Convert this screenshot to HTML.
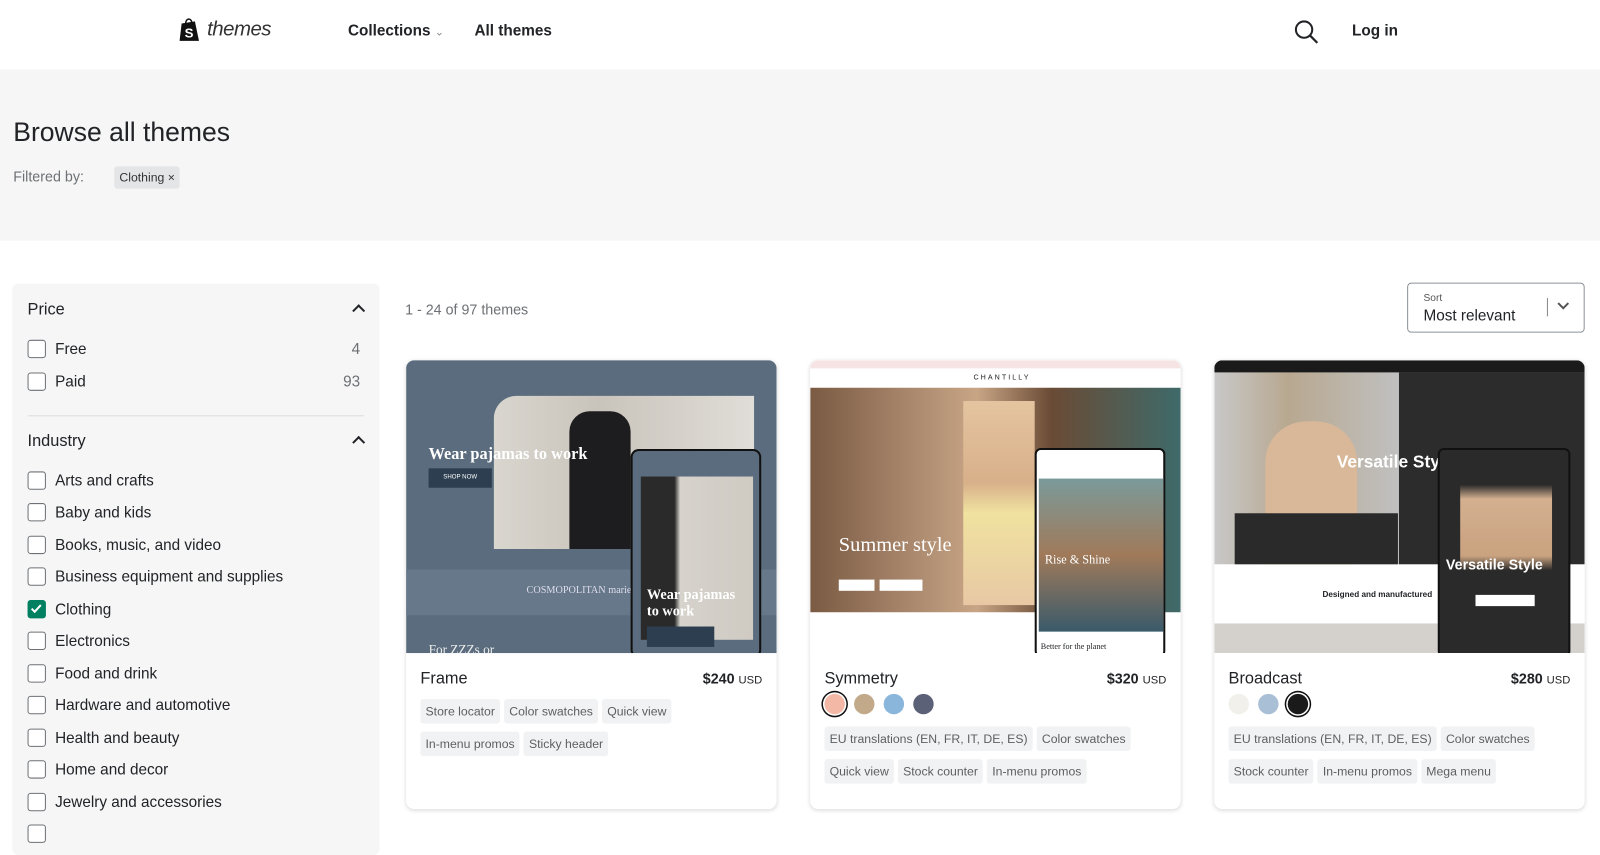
<!DOCTYPE html>
<html><head><style>
*{box-sizing:border-box;margin:0;padding:0}
body{width:1600px;height:826px;overflow:hidden;background:#fff;font-family:"Liberation Sans",sans-serif;color:#212326;position:relative}
#w{position:absolute;left:0;top:0;width:1568px;height:810px;transform:scale(1.0204);transform-origin:0 0}
.abs{position:absolute}
.nav{font-weight:bold;font-size:15px;top:22px;color:#212326}
.hero{top:68px;left:0;width:1568px;height:168px;background:#f6f6f7}
.side{left:12px;top:278px;width:360px;height:560px;background:#f6f6f7;border-radius:6px}
.cb{position:absolute;left:15px;width:18px;height:18px;border:1.5px solid #6d7175;border-radius:3px;background:#fff}
.lbl{position:absolute;left:42px;font-size:15px;color:#212326}
.card{position:absolute;top:353px;width:363px;height:440px;background:#fff;border-radius:8px;box-shadow:0 1px 4px rgba(0,0,0,.15);overflow:hidden}
.img{position:absolute;left:0;top:0;width:363px;height:287px;overflow:hidden}
.name{position:absolute;left:14px;top:304px;font-size:16px}
.price{position:absolute;right:14px;top:304px;font-size:14px;font-weight:bold}
.price small{font-size:11px;font-weight:normal}
.tags{position:absolute;left:14px;width:340px}
.tag{display:inline-block;background:#f1f2f3;color:#5c5f62;font-size:12px;padding:5px 5px;margin:0 4px 8px 0;border-radius:3px}
.sw{display:inline-block;width:20px;height:20px;border-radius:50%;margin-right:9px}
.chev{position:absolute;right:16px;width:9px;height:9px;border-left:2px solid #212326;border-top:2px solid #212326;transform:rotate(45deg)}
</style></head><body><div id="w">
<svg class="abs" style="left:175px;top:16px" width="22" height="26" viewBox="0 0 22 26"><path d="M3 7 L16 5 L20 24 L1 24 Z" fill="#111"/><path d="M7 7 C7 2 12 1 13 6" stroke="#111" stroke-width="1.5" fill="none"/><text x="6" y="21" font-size="13" font-weight="bold" fill="#fff" font-family="Liberation Sans">S</text></svg>
<div class="abs" style="left:203px;top:18px;font-size:20px;font-style:italic;color:#333;letter-spacing:-0.5px">themes</div>
<div class="abs nav" style="left:341px">Collections <span style="font-weight:normal;color:#888;font-size:11px">&#8964;</span></div>
<div class="abs nav" style="left:465px">All themes</div>
<svg class="abs" style="left:1268px;top:19px" width="25" height="25" viewBox="0 0 25 25"><circle cx="10" cy="10" r="8" stroke="#212326" stroke-width="2" fill="none"/><line x1="16" y1="16" x2="23" y2="23" stroke="#212326" stroke-width="2.2"/></svg>
<div class="abs nav" style="left:1325px">Log in</div>
<div class="abs hero"></div>
<div class="abs" style="left:13px;top:114px;font-size:26px;color:#212326">Browse all themes</div>
<div class="abs" style="left:13px;top:165px;font-size:14px;color:#6d7175">Filtered by:</div>
<div class="abs" style="left:112px;top:163px;background:#e4e5e7;padding:4px 5px;font-size:12px;color:#333;border-radius:3px">Clothing ×</div>
<div class="abs side">
<div class="lbl" style="left:15px;top:17px;font-size:16px">Price</div><div class="chev" style="top:22px"></div>
<div class="cb" style="top:55px"></div><div class="lbl" style="top:56px">Free</div><div class="lbl" style="left:auto;right:19px;top:56px;color:#6d7175">4</div>
<div class="cb" style="top:87px"></div><div class="lbl" style="top:88px">Paid</div><div class="lbl" style="left:auto;right:19px;top:88px;color:#6d7175">93</div>
<div style="position:absolute;left:15px;top:129px;width:330px;height:1px;background:#dcdcdc"></div>
<div class="lbl" style="left:15px;top:146px;font-size:16px">Industry</div><div class="chev" style="top:151px"></div>
<div class="cb" style="top:184px"></div><div class="lbl" style="top:185px">Arts and crafts</div>
<div class="cb" style="top:215px"></div><div class="lbl" style="top:216px">Baby and kids</div>
<div class="cb" style="top:247px"></div><div class="lbl" style="top:248px">Books, music, and video</div>
<div class="cb" style="top:278px"></div><div class="lbl" style="top:279px">Business equipment and supplies</div>
<div class="cb" style="top:310px;background:#008060;border-color:#008060"><svg width="15" height="15" viewBox="0 0 15 15" style="position:absolute;left:0;top:0"><path d="M3 7.5 L6 10.5 L12 4" stroke="#fff" stroke-width="2" fill="none"/></svg></div><div class="lbl" style="top:311px">Clothing</div>
<div class="cb" style="top:341px"></div><div class="lbl" style="top:342px">Electronics</div>
<div class="cb" style="top:373px"></div><div class="lbl" style="top:374px">Food and drink</div>
<div class="cb" style="top:404px"></div><div class="lbl" style="top:405px">Hardware and automotive</div>
<div class="cb" style="top:436px"></div><div class="lbl" style="top:437px">Health and beauty</div>
<div class="cb" style="top:467px"></div><div class="lbl" style="top:468px">Home and decor</div>
<div class="cb" style="top:499px"></div><div class="lbl" style="top:500px">Jewelry and accessories</div>
<div class="cb" style="top:530px"></div>
</div>
<div class="abs" style="left:397px;top:295px;font-size:14px;color:#6d7175">1 - 24 of 97 themes</div>
<div class="abs" style="left:1379px;top:277px;width:174px;height:49px;border:1px solid #8c9196;border-radius:4px">
<div class="abs" style="left:15px;top:9px;font-size:10px;color:#555">Sort</div>
<div class="abs" style="left:15px;top:23px;font-size:15px">Most relevant</div>
<div class="abs" style="left:136px;top:14px;width:1px;height:18px;background:#888"></div>
<svg class="abs" style="left:146px;top:18px" width="12" height="8"><path d="M1 1 L6 6 L11 1" stroke="#555" stroke-width="2" fill="none"/></svg>
</div>

<div class="card" style="left:398px">
<div class="img" style="background:#5a6c7d">
<div class="abs" style="left:86px;top:35px;width:255px;height:150px;background:linear-gradient(90deg,#d9d6cf,#c9c4bb 40%,#e0ddd8);border-radius:22px 0 0 0"></div>
<div class="abs" style="left:160px;top:50px;width:60px;height:135px;background:#1d1d1f;border-radius:20px 20px 0 0"></div>
<div class="abs" style="left:0;top:205px;width:363px;height:45px;background:#667889"></div>
<div class="abs" style="left:22px;top:84px;font-family:'Liberation Serif',serif;font-weight:bold;font-size:16px;color:#fff">Wear pajamas to work</div>
<div class="abs" style="left:22px;top:106px;width:62px;height:19px;background:#2c3e50;color:#fff;font-size:6px;text-align:center;line-height:19px">SHOP NOW</div>
<div class="abs" style="left:118px;top:220px;color:#dde;font-size:10px;font-family:'Liberation Serif',serif">COSMOPOLITAN marie claire</div>
<div class="abs" style="left:22px;top:276px;color:#eee;font-size:13px;font-family:'Liberation Serif',serif">For ZZZs or</div>
<div class="abs" style="left:220px;top:87px;width:128px;height:205px;background:#5a6c7d;border:2px solid #111;border-radius:8px">
<div class="abs" style="left:8px;top:25px;width:110px;height:160px;background:linear-gradient(90deg,#2a2a2a 30%,#d6d2cc 35%,#cfcac2)"></div>
<div class="abs" style="left:14px;top:134px;font-family:'Liberation Serif',serif;font-weight:bold;font-size:14px;color:#fff;line-height:16px">Wear pajamas<br>to work</div>
<div class="abs" style="left:14px;top:172px;width:66px;height:20px;background:#2c3e50"></div>
</div></div>
<div class="name">Frame</div><div class="price">$240 <small>USD</small></div>
<div class="tags" style="top:332px"><span class="tag">Store locator</span><span class="tag">Color swatches</span><span class="tag">Quick view</span><br><span class="tag">In-menu promos</span><span class="tag">Sticky header</span></div>
</div>

<div class="card" style="left:794px">
<div class="img" style="background:#fff">
<div class="abs" style="left:0;top:0;width:363px;height:8px;background:#f6e4e4"></div>
<div class="abs" style="left:160px;top:14px;font-size:7px;letter-spacing:2px">CHANTILLY</div>
<div class="abs" style="left:0;top:27px;width:363px;height:220px;background:linear-gradient(90deg,#7b5a43,#a5846a 25%,#c8a585 45%,#6a4b35 65%,#3e6a6a)"></div>
<div class="abs" style="left:150px;top:40px;width:70px;height:200px;background:linear-gradient(#e4c4a0,#d8b08a 40%,#f0e2a0 55%,#e8c8a4)"></div>
<div class="abs" style="left:28px;top:170px;font-family:'Liberation Serif',serif;font-size:20px;color:#fff">Summer style</div>
<div class="abs" style="left:28px;top:215px;width:35px;height:11px;background:#fff"></div><div class="abs" style="left:68px;top:215px;width:42px;height:11px;background:#fff"></div>
<div class="abs" style="left:220px;top:86px;width:128px;height:205px;background:#fff;border:2px solid #111;border-radius:6px">
<div class="abs" style="left:2px;top:28px;width:122px;height:150px;background:linear-gradient(#7a9a9a,#a07a5a 50%,#3a5a6a)"></div>
<div class="abs" style="left:8px;top:100px;font-family:'Liberation Serif',serif;font-size:12px;color:#fff">Rise &amp; Shine</div>
<div class="abs" style="left:4px;top:188px;font-family:'Liberation Serif',serif;font-size:8px">Better for the planet</div>
</div></div>
<div class="name">Symmetry</div><div class="price">$320 <small>USD</small></div>
<div class="abs" style="left:14px;top:327px"><span class="sw" style="background:#f4b9a6;box-shadow:0 0 0 1.5px #fff,0 0 0 3px #111"></span><span class="sw" style="background:#c2a98a"></span><span class="sw" style="background:#8ab6dc"></span><span class="sw" style="background:#5b6177"></span></div>
<div class="tags" style="top:359px"><span class="tag">EU translations (EN, FR, IT, DE, ES)</span><span class="tag">Color swatches</span><br><span class="tag">Quick view</span><span class="tag">Stock counter</span><span class="tag">In-menu promos</span></div>
</div>

<div class="card" style="left:1190px">
<div class="img" style="background:#fff">
<div class="abs" style="left:0;top:0;width:363px;height:12px;background:#1a1a1a"></div>
<div class="abs" style="left:0;top:12px;width:181px;height:188px;background:linear-gradient(90deg,#c8c8c8,#b8a890 40%,#c0c0c0)"></div>
<div class="abs" style="left:50px;top:60px;width:90px;height:140px;background:#d9b89a;border-radius:40px 40px 0 0"></div>
<div class="abs" style="left:20px;top:150px;width:160px;height:50px;background:#2a2a2a"></div>
<div class="abs" style="left:181px;top:12px;width:182px;height:188px;background:#2c2c2c"></div>
<div class="abs" style="left:120px;top:90px;font-size:17px;font-weight:bold;color:#fff">Versatile Style</div>
<div class="abs" style="left:106px;top:225px;font-size:8px;font-weight:bold">Designed and manufactured</div>
<div class="abs" style="left:0;top:258px;width:363px;height:29px;background:#d4d0cc"></div>
<div class="abs" style="left:219px;top:86px;width:130px;height:205px;background:#2a2a2a;border:2px solid #111;border-radius:6px">
<div class="abs" style="left:20px;top:20px;width:90px;height:140px;background:linear-gradient(#2a2a2a 10%,#d4b090 20%,#c9a27f 60%,#2a2a2a 70%)"></div>
<div class="abs" style="left:6px;top:104px;font-size:14px;font-weight:bold;color:#fff">Versatile Style</div>
<div class="abs" style="left:35px;top:142px;width:58px;height:11px;background:#fff"></div>
</div></div>
<div class="name">Broadcast</div><div class="price">$280 <small>USD</small></div>
<div class="abs" style="left:14px;top:327px"><span class="sw" style="background:#f1f0ea"></span><span class="sw" style="background:#a9bfd6"></span><span class="sw" style="background:#1a1a1a;box-shadow:0 0 0 1.5px #fff,0 0 0 3px #111"></span></div>
<div class="tags" style="top:359px"><span class="tag">EU translations (EN, FR, IT, DE, ES)</span><span class="tag">Color swatches</span><br><span class="tag">Stock counter</span><span class="tag">In-menu promos</span><span class="tag">Mega menu</span></div>
</div>
</div></body></html>
